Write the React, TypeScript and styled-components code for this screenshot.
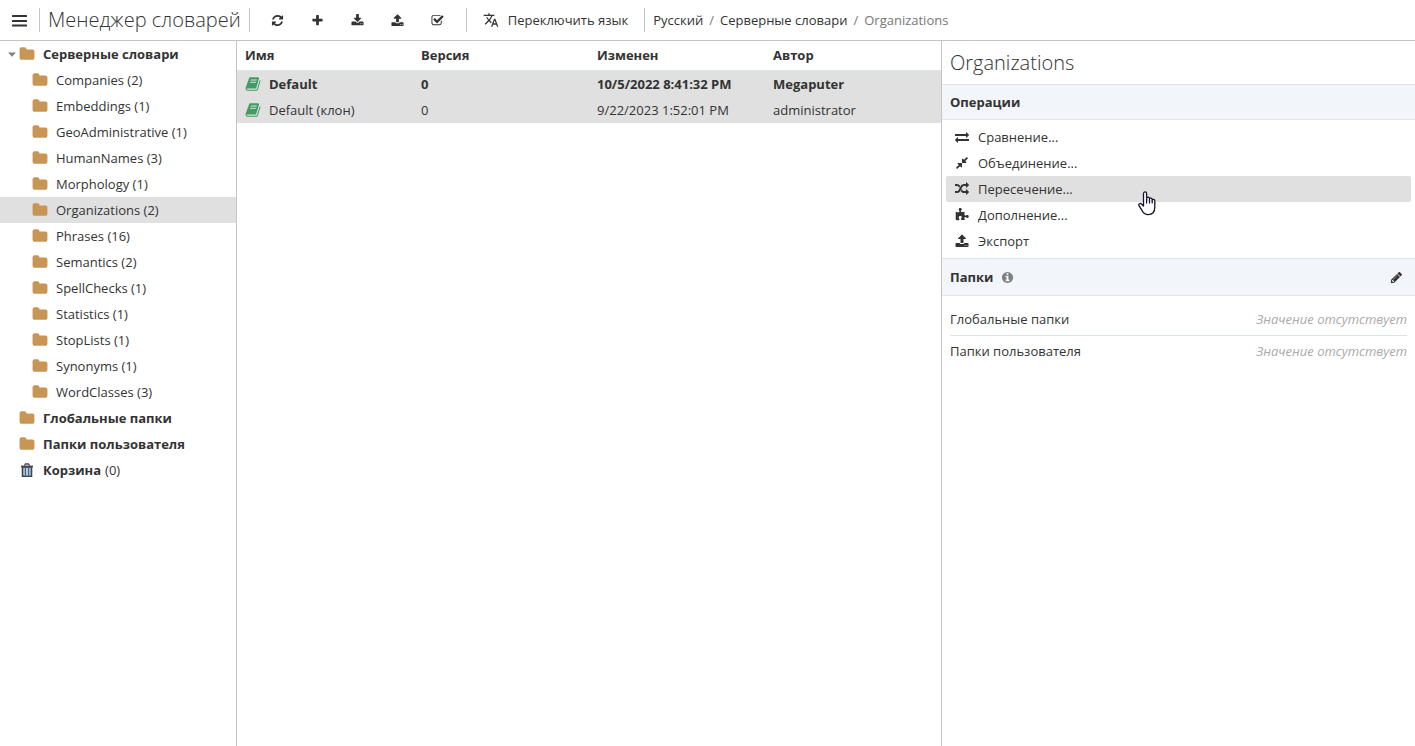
import React from "react";
import styled, { createGlobalStyle, css } from "styled-components";
import { MdTranslate } from "react-icons/md";

const GlobalStyle = createGlobalStyle`
  * { box-sizing: border-box; }
  body {
    margin: 0;
    background: #fff;
    color: #333;
    font: 13px/26px "Open Sans", "Noto Sans", sans-serif;
  }
  button { font: inherit; color: inherit; }
`;

const glyphs = {
  refresh:
    "M1639 1056q0 5-1 7-64 268-268 434.5t-478 166.5q-146 0-282.5-55t-243.5-157l-129 129q-19 19-45 19t-45-19-19-45v-448q0-26 19-45t45-19h448q26 0 45 19t19 45-19 45l-137 137q71 66 161 102t187 36q134 0 250-65t186-179q11-17 53-117 8-23 30-23h192q13 0 22.5 9.5t9.5 22.5zm25-800v448q0 26-19 45t-45 19h-448q-26 0-45-19t-19-45 19-45l138-138q-148-137-349-137-134 0-250 65t-186 179q-11 17-53 117-8 23-30 23h-199q-13 0-22.5-9.5t-9.5-22.5v-7q65-268 270-434.5t480-166.5q146 0 284 55.5t245 156.5l130-129q19-19 45-19t45 19 19 45z",
  plus:
    "M1600 736v192q0 40-28 68t-68 28h-416v416q0 40-28 68t-68 28h-192q-40 0-68-28t-28-68v-416h-416q-40 0-68-28t-28-68v-192q0-40 28-68t68-28h416v-416q0-40 28-68t68-28h192q40 0 68 28t28 68v416h416q40 0 68 28t28 68z",
  download:
    "M1344 1344q0-26-19-45t-45-19-45 19-19 45 19 45 45 19 45-19 19-45zm256 0q0-26-19-45t-45-19-45 19-19 45 19 45 45 19 45-19 19-45zm128-224v320q0 40-28 68t-68 28h-1472q-40 0-68-28t-28-68v-320q0-40 28-68t68-28h465l135 136q58 56 136 56t136-56l136-136h464q40 0 68 28t28 68zm-325-569q17 41-14 70l-448 448q-18 19-45 19t-45-19l-448-448q-31-29-14-70 17-39 59-39h256v-448q0-26 19-45t45-19h256q26 0 45 19t19 45v448h256q42 0 59 39z",
  upload:
    "M1344 1472q0-26-19-45t-45-19-45 19-19 45 19 45 45 19 45-19 19-45zm256 0q0-26-19-45t-45-19-45 19-19 45 19 45 45 19 45-19 19-45zm128-224v320q0 40-28 68t-68 28h-1472q-40 0-68-28t-28-68v-320q0-40 28-68t68-28h427q21 56 70.5 92t110.5 36h256q61 0 110.5-36t70.5-92h427q40 0 68 28t28 68zm-325-648q-17 40-59 40h-256v448q0 26-19 45t-45 19h-256q-26 0-45-19t-19-45v-448h-256q-42 0-59-40-17-39 14-69l448-448q18-19 45-19t45 19l448 448q31 30 14 69z",
  check:
    "M1472 930v318q0 119-84.5 203.5t-203.5 84.5h-832q-119 0-203.5-84.5t-84.5-203.5v-832q0-119 84.5-203.5t203.5-84.5h832q63 0 117 25 15 7 18 23 3 17-9 29l-49 49q-10 10-23 10-3 0-9-2-23-6-45-6h-832q-66 0-113 47t-47 113v832q0 66 47 113t113 47h832q66 0 113-47t47-113v-254q0-13 9-22l64-64q10-10 23-10 6 0 12 3 20 8 20 29zm231-489l-814 814q-24 24-57 24t-57-24l-430-430q-24-24-24-57t24-57l110-110q24-24 57-24t57 24l263 263 647-647q24-24 57-24t57 24l110 110q24 24 24 57t-24 57z",
  exchange:
    "M1792 1184v192q0 13-9.5 22.5t-22.5 9.5h-1376v192q0 13-9.5 22.5t-22.5 9.5q-12 0-24-10l-319-320q-9-9-9-22 0-14 9-23l320-320q9-9 23-9 13 0 22.5 9.5t9.5 22.5v192h1376q13 0 22.5 9.5t9.5 22.5zm0-544q0 14-9 23l-320 320q-9 9-23 9-13 0-22.5-9.5t-9.5-22.5v-192h-1376q-13 0-22.5-9.5t-9.5-22.5v-192q0-13 9.5-22.5t22.5-9.5h1376v-192q0-14 9-23t23-9q12 0 24 10l319 319q9 9 9 23z",
  compress:
    "M896 960v448q0 26-19 45t-45 19-45-19l-144-144-332 332q-10 10-23 10t-23-10l-114-114q-10-10-10-23t10-23l332-332-144-144q-19-19-19-45t19-45 45-19h448q26 0 45 19t19 45zm755-672q0 13-10 23l-332 332 144 144q19 19 19 45t-19 45-45 19h-448q-26 0-45-19t-19-45v-448q0-26 19-45t45-19 45 19l144 144 332-332q10-10 23-10t23 10l114 114q10 10 10 23z",
  random:
    "M666 481q-60 92-137 273-22-45-37-72.5t-40.5-63.5-51-56.5-63-35-81.5-14.5h-224q-14 0-23-9t-9-23v-192q0-14 9-23t23-9h224q250 0 410 225zm1126 799q0 14-9 23l-320 320q-9 9-23 9-13 0-22.5-9.5t-9.5-22.5v-192q-32 0-85 .5t-81 1-73-1-71-5-64-10.5-63-18.5-58-28.5-59-40-55-53.5-56-69.5q59-93 136-273 22 45 37 72.5t40.5 63.5 51 56.5 63 35 81.5 14.5h256v-192q0-14 9-23t23-9q12 0 24 10l319 319q9 9 9 23zm0-896q0 14-9 23l-320 320q-9 9-23 9-13 0-22.5-9.5t-9.5-22.5v-192h-256q-48 0-87 15t-69 45-51 61.5-45 77.5q-32 62-78 171-29 66-49.5 111t-54 105-64 100-74 83-90 68.5-106.5 42-128 16.5h-224q-14 0-23-9t-9-23v-192q0-14 9-23t23-9h224q48 0 87-15t69-45 51-61.5 45-77.5q32-62 78-171 29-66 49.5-111t54-105 64-100 74-83 90-68.5 106.5-42 128-16.5h256v-192q0-14 9-23t23-9q12 0 24 10l319 319q9 9 9 23z",
  puzzle:
    "M1755 1083q0 81-44.5 135t-123.5 54q-41 0-77.5-17.5t-59-38-56.5-38-71-17.5q-110 0-110 124 0 39 16 115t15 115v5q-22 0-33 1-34 3-97.5 11.5t-115.5 13.5-98 5q-61 0-103-26.5t-42-83.5q0-37 17.5-71t38-56.5 38-59 17.5-77.5q0-79-54-123.5t-135-44.5q-84 0-143 45.5t-59 127.5q0 43 15 83t33.5 64.5 33.5 53 15 50.5q0 45-46 89-37 35-117 35-95 0-245-24-9-2-27.5-4t-27.5-4l-13-2q-1 0-3-1-2 0-2-1v-1024q2 1 17.5 3.5t34 5 21.5 3.5q150 24 245 24 80 0 117-35 46-44 46-89 0-22-15-50.5t-33.5-53-33.5-64.5-15-83q0-82 59-127.5t144-45.5q80 0 134 44.5t54 123.5q0 41-17.5 77.5t-38 59-38 56.5-17.5 71q0 57 42 83.5t103 26.5q64 0 180-15t163-17v2q-1 2-3.5 17.5t-5 34-3.5 21.5q-24 150-24 245 0 80 35 117 44 46 89 46 22 0 50.5-15t53-33.5 64.5-33.5 83-15q82 0 127.5 59t45.5 143z",
  info:
    "M1152 1376v-160q0-14-9-23t-23-9h-96v-512q0-14-9-23t-23-9h-320q-14 0-23 9t-9 23v160q0 14 9 23t23 9h96v320h-96q-14 0-23 9t-9 23v160q0 14 9 23t23 9h448q14 0 23-9t9-23zm-128-896v-160q0-14-9-23t-23-9h-192q-14 0-23 9t-9 23v160q0 14 9 23t23 9h192q14 0 23-9t9-23zm640 416q0 209-103 385.5t-279.5 279.5-385.5 103-385.5-103-279.5-279.5-103-385.5 103-385.5 279.5-279.5 385.5-103 385.5 103 279.5 279.5 103 385.5z",
  pencil:
    "M491 1536l91-91-235-235-91 91v107h128v128h107zm523-928q0-22-22-22-10 0-17 7l-542 542q-7 7-7 17 0 22 22 22 10 0 17-7l542-542q7-7 7-17zm-54-192l416 416-832 832h-416v-416zm683 96q0 53-37 90l-166 166-416-416 166-165q36-38 90-38 53 0 91 38l235 234q37 39 37 91z",
  book:
    "M1703 478q40 57 18 129l-275 906q-19 64-76.5 107.5t-122.5 43.5h-923q-77 0-148.5-53.5t-99.5-131.5q-24-67-2-127 0-4 3-27t4-37q1-8-3-21.5t-3-19.5q2-11 8-21t16.5-23.5 16.5-23.5q23-38 45-91.5t30-91.5q3-10 .5-30t-.5-28q3-11 17-28t17-23q21-36 42-92t25-90q1-9-2.5-32t.5-28q4-13 22-30.5t22-22.5q19-26 42.5-84.5t27.5-96.5q1-8-3-25.5t-2-26.5q2-8 9-18t18-23 17-21q8-12 16.5-30.5t15-35 16-36 19.5-32 26.5-23.5 36-11.5 47.5 5.5l-1 3q38-9 51-9h761q74 0 114 56t18 130l-274 906q-36 119-71.5 153.5t-128.5 34.5h-869q-27 0-38 15-11 16-1 43 24 70 144 70h923q29 0 56-15.5t35-41.5l300-987q7-22 5-57 38 15 59 43zm-1064 2q-4 13 2 22.5t20 9.5h608q13 0 25.5-9.5t16.5-22.5l21-64q4-13-2-22.5t-20-9.5h-608q-13 0-25.5 9.5t-16.5 22.5zm-83 256q-4 13 2 22.5t20 9.5h608q13 0 25.5-9.5t16.5-22.5l21-64q4-13-2-22.5t-20-9.5h-608q-13 0-25.5 9.5t-16.5 22.5z",
  folder:
    "M1728 608v704q0 92-66 158t-158 66h-1216q-92 0-158-66t-66-158v-960q0-92 66-158t158-66h320q92 0 158 66t66 158v32h672q92 0 158 66t66 158z",
};

type GlyphName = keyof typeof glyphs;

const Glyph = ({ name, size = 13, color = "currentColor" }: { name: GlyphName; size?: number; color?: string }) => (
  <svg width={size} height={size} viewBox="0 0 1792 1792" fill={color} aria-hidden="true">
    <path d={glyphs[name]} />
  </svg>
);

const MenuGlyph = () => (
  <svg width="15" height="13" viewBox="0 0 15 13" fill="#333" aria-hidden="true">
    <rect y="1" width="15" height="2" rx="0.5" />
    <rect y="6" width="15" height="2" rx="0.5" />
    <rect y="10.5" width="15" height="2" rx="0.5" />
  </svg>
);

const TrashGlyph = () => (
  <svg width="16" height="16" viewBox="0 0 16 16" fill="none" aria-hidden="true">
    <path d="M3.5 5h9v9.2h-9z" fill="#a9cdf0" stroke="#44444c" strokeWidth="1.6" />
    <path d="M6.4 6v7.6M9.6 6v7.6" stroke="#4f5a6c" strokeWidth="1.1" />
    <path d="M2 4.5h12" stroke="#44444c" strokeWidth="1.8" />
    <path d="M5.4 3.8 6.4 2h3.2l1 1.8" stroke="#4c4c54" strokeWidth="1.3" />
  </svg>
);

const Page = styled.div`
  display: flex;
  flex-direction: column;
  min-height: 100vh;
`;

const Toolbar = styled.header`
  display: flex;
  align-items: center;
  height: 41px;
  border-bottom: 1px solid #c4c4c4;
  white-space: nowrap;
`;

const Divider = styled.span`
  width: 1px;
  height: 24px;
  background: #c4c4c4;
`;

const ToolGroup = styled.div`
  display: flex;
  padding: 0 8px;
`;

const ToolButton = styled.button<{ $labelled?: boolean }>`
  display: flex;
  align-items: center;
  justify-content: center;
  gap: 9px;
  width: ${(p) => (p.$labelled ? "auto" : "40px")};
  height: 32px;
  padding: 0 ${(p) => (p.$labelled ? "8px" : "0")};
  border: 0;
  background: none;
`;

const MenuButton = styled(ToolButton)`
  width: 39px;
`;

const AppTitle = styled.h1`
  margin: 0;
  padding: 0 8px;
  font-size: 20px;
  font-weight: 300;
`;

const Breadcrumbs = styled.nav`
  display: flex;
  gap: 6px;
  padding: 0 8px;
  color: #777;
`;

const Crumb = styled.a`
  color: #333;
  text-decoration: none;
`;

const Columns = styled.div`
  flex: 1;
  display: grid;
  grid-template-columns: 237px 1fr 473px;
`;

const Sidebar = styled.nav`
  border-right: 1px solid #c4c4c4;
`;

const Tree = styled.ul`
  margin: 0;
  padding: 0;
  list-style: none;
`;

const TreeRow = styled.a<{ $level: number; $selected?: boolean }>`
  display: flex;
  align-items: center;
  height: 26px;
  padding-left: ${(p) => (p.$level ? "21px" : "8px")};
  background: ${(p) => (p.$selected ? "#e0e0e0" : "none")};
  color: inherit;
  text-decoration: none;
  white-space: nowrap;
`;

const Twisty = styled.span`
  display: flex;
  width: 11px;
`;

const IconSlot = styled.span`
  display: flex;
  width: 24px;
`;

const RootName = styled.b`
  margin-right: 4px;
`;

const Main = styled.main`
  border-right: 1px solid #c4c4c4;
`;

const Table = styled.table`
  width: 100%;
  table-layout: fixed;
  border-collapse: collapse;
  text-align: left;

  th, td { padding: 0 0 0 8px; }
`;

const HeadRow = styled.tr`
  height: 29px;
  border-bottom: 1px solid #dde3ec;
`;

const DataRow = styled.tr<{ $bold?: boolean }>`
  height: 26px;
  background: #e0e0e0;
  font-weight: ${(p) => (p.$bold ? 700 : 400)};
`;

const NameCell = styled.div`
  display: flex;
  align-items: center;
`;

const PanelTitle = styled.h2`
  margin: 0;
  padding: 0 8px;
  font-size: 20px;
  font-weight: 300;
  line-height: 43px;
`;

const SectionHead = styled.div<{ $tall?: boolean }>`
  display: flex;
  align-items: center;
  gap: 8px;
  height: ${(p) => (p.$tall ? "38px" : "36px")};
  padding: 0 8px;
  border: solid #dde3ec;
  border-width: 1px 0;
  background: #f2f5fa;
`;

const SectionTitle = styled.h3`
  margin: 0;
  font-size: 13px;
`;

const EditButton = styled.button`
  display: flex;
  margin-left: auto;
  padding: 4px;
  border: 0;
  background: none;
`;

const Operations = styled.ul`
  margin: 0;
  padding: 4px;
  list-style: none;
`;

const operationHover = css`
  background: #e0e0e0;
`;

const Operation = styled.button<{ $hovered?: boolean }>`
  position: relative;
  display: flex;
  align-items: center;
  gap: 9px;
  width: 100%;
  height: 26px;
  padding: 0 9px;
  border: 0;
  border-radius: 2px;
  background: none;
  ${(p) => p.$hovered && operationHover}
`;

const Pointer = styled.svg`
  position: absolute;
  left: 192px;
  top: 15px;
  z-index: 1;
`;

const Properties = styled.dl`
  margin: 0;
  padding: 8px;
`;

const Property = styled.div`
  display: flex;
  justify-content: space-between;
  height: 32px;
  line-height: 31px;
  border-bottom: 1px solid #dde3ec;

  &:last-child { border-bottom: 0; }
`;

const PropertyValue = styled.dd`
  margin: 0;
  color: #aaa;
  font-style: italic;
`;

const folders = [
  "Companies (2)",
  "Embeddings (1)",
  "GeoAdministrative (1)",
  "HumanNames (3)",
  "Morphology (1)",
  "Organizations (2)",
  "Phrases (16)",
  "Semantics (2)",
  "SpellChecks (1)",
  "Statistics (1)",
  "StopLists (1)",
  "Synonyms (1)",
  "WordClasses (3)",
];

const dictionaries = [
  { name: "Default", version: "0", changed: "10/5/2022 8:41:32 PM", author: "Megaputer", bold: true },
  { name: "Default (клон)", version: "0", changed: "9/22/2023 1:52:01 PM", author: "administrator", bold: false },
];

const tools: { icon: GlyphName; label: string }[] = [
  { icon: "refresh", label: "Обновить" },
  { icon: "plus", label: "Создать" },
  { icon: "download", label: "Импорт" },
  { icon: "upload", label: "Экспорт" },
  { icon: "check", label: "Выбрать" },
];

const operations: { icon: GlyphName; label: string; hovered?: boolean }[] = [
  { icon: "exchange", label: "Сравнение..." },
  { icon: "compress", label: "Объединение..." },
  { icon: "random", label: "Пересечение...", hovered: true },
  { icon: "puzzle", label: "Дополнение..." },
  { icon: "upload", label: "Экспорт" },
];

const FolderIcon = () => (
  <IconSlot>
    <Glyph name="folder" size={16} color="#c89554" />
  </IconSlot>
);

export default function App() {
  return (
    <Page>
      <GlobalStyle />
      <Toolbar>
        <MenuButton aria-label="Меню">
          <MenuGlyph />
        </MenuButton>
        <Divider />
        <AppTitle>Менеджер словарей</AppTitle>
        <Divider />
        <ToolGroup>
          {tools.map((t) => (
            <ToolButton key={t.icon} aria-label={t.label}>
              <Glyph name={t.icon} />
            </ToolButton>
          ))}
        </ToolGroup>
        <Divider />
        <ToolGroup>
          <ToolButton $labelled>
            <MdTranslate size={16} />
            Переключить язык
          </ToolButton>
        </ToolGroup>
        <Divider />
        <Breadcrumbs>
          <Crumb href="#ru">Русский</Crumb>
          <span>/</span>
          <Crumb href="#server">Серверные словари</Crumb>
          <span>/</span>
          <span>Organizations</span>
        </Breadcrumbs>
      </Toolbar>

      <Columns>
        <Sidebar>
          <Tree>
            <li>
              <TreeRow href="#server" $level={0}>
                <Twisty>
                  <svg width="8" height="5" viewBox="0 0 8 5" aria-hidden="true">
                    <path d="M0 0.5h8L4 4.8z" fill="#808080" />
                  </svg>
                </Twisty>
                <FolderIcon />
                <RootName>Серверные словари</RootName>
              </TreeRow>
              <Tree>
                {folders.map((f) => (
                  <li key={f}>
                    <TreeRow href={"#" + f.split(" ")[0]} $level={1} $selected={f.startsWith("Organizations")}>
                      <Twisty />
                      <FolderIcon />
                      {f}
                    </TreeRow>
                  </li>
                ))}
              </Tree>
            </li>
            {["Глобальные папки", "Папки пользователя"].map((name) => (
              <li key={name}>
                <TreeRow href="#folders" $level={0}>
                  <Twisty />
                  <FolderIcon />
                  <RootName>{name}</RootName>
                </TreeRow>
              </li>
            ))}
            <li>
              <TreeRow href="#trash" $level={0}>
                <Twisty />
                <IconSlot>
                  <TrashGlyph />
                </IconSlot>
                <RootName>Корзина</RootName>
                (0)
              </TreeRow>
            </li>
          </Tree>
        </Sidebar>

        <Main>
          <Table>
            <thead>
              <HeadRow>
                <th>Имя</th>
                <th>Версия</th>
                <th>Изменен</th>
                <th>Автор</th>
              </HeadRow>
            </thead>
            <tbody>
              {dictionaries.map((d) => (
                <DataRow key={d.name} $bold={d.bold}>
                  <td>
                    <NameCell>
                      <IconSlot>
                        <Glyph name="book" size={16} color="#3f9c63" />
                      </IconSlot>
                      {d.name}
                    </NameCell>
                  </td>
                  <td>{d.version}</td>
                  <td>{d.changed}</td>
                  <td>{d.author}</td>
                </DataRow>
              ))}
            </tbody>
          </Table>
        </Main>

        <aside>
          <PanelTitle>Organizations</PanelTitle>
          <SectionHead>
            <SectionTitle>Операции</SectionTitle>
          </SectionHead>
          <Operations>
            {operations.map((o) => (
              <li key={o.label}>
                <Operation $hovered={o.hovered}>
                  <Glyph name={o.icon} size={14} />
                  {o.label}
                  {o.hovered && (
                    <Pointer width="18" height="25" viewBox="0 0 18 25" aria-hidden="true">
                      <path
                        d="M5.5 15V2.6C5.5.4 8.6.4 8.6 2.6V9 7.4c0-1.8 2.9-1.7 2.9 0V9.4 8.3c0-1.7 2.7-1.6 2.7 0v2V9.5c0-1.5 2.6-1.5 2.6.2V16c0 5-2.4 7.6-6.6 7.6-3.4 0-4.8-1.3-6.4-4.4L1 14.6c-.8-1.6 1.2-3 2.5-1.6z"
                        fill="#fff"
                        stroke="#14142a"
                        strokeWidth="1.3"
                        strokeLinejoin="round"
                      />
                      <path d="M8.6 8v4.4M11.5 9v3.4M14.2 10v2.6" stroke="#14142a" strokeWidth="1.2" />
                    </Pointer>
                  )}
                </Operation>
              </li>
            ))}
          </Operations>
          <SectionHead $tall>
            <SectionTitle>Папки</SectionTitle>
            <Glyph name="info" color="#808080" />
            <EditButton aria-label="Изменить папки">
              <Glyph name="pencil" />
            </EditButton>
          </SectionHead>
          <Properties>
            <Property>
              <dt>Глобальные папки</dt>
              <PropertyValue>Значение отсутствует</PropertyValue>
            </Property>
            <Property>
              <dt>Папки пользователя</dt>
              <PropertyValue>Значение отсутствует</PropertyValue>
            </Property>
          </Properties>
        </aside>
      </Columns>
    </Page>
  );
}
